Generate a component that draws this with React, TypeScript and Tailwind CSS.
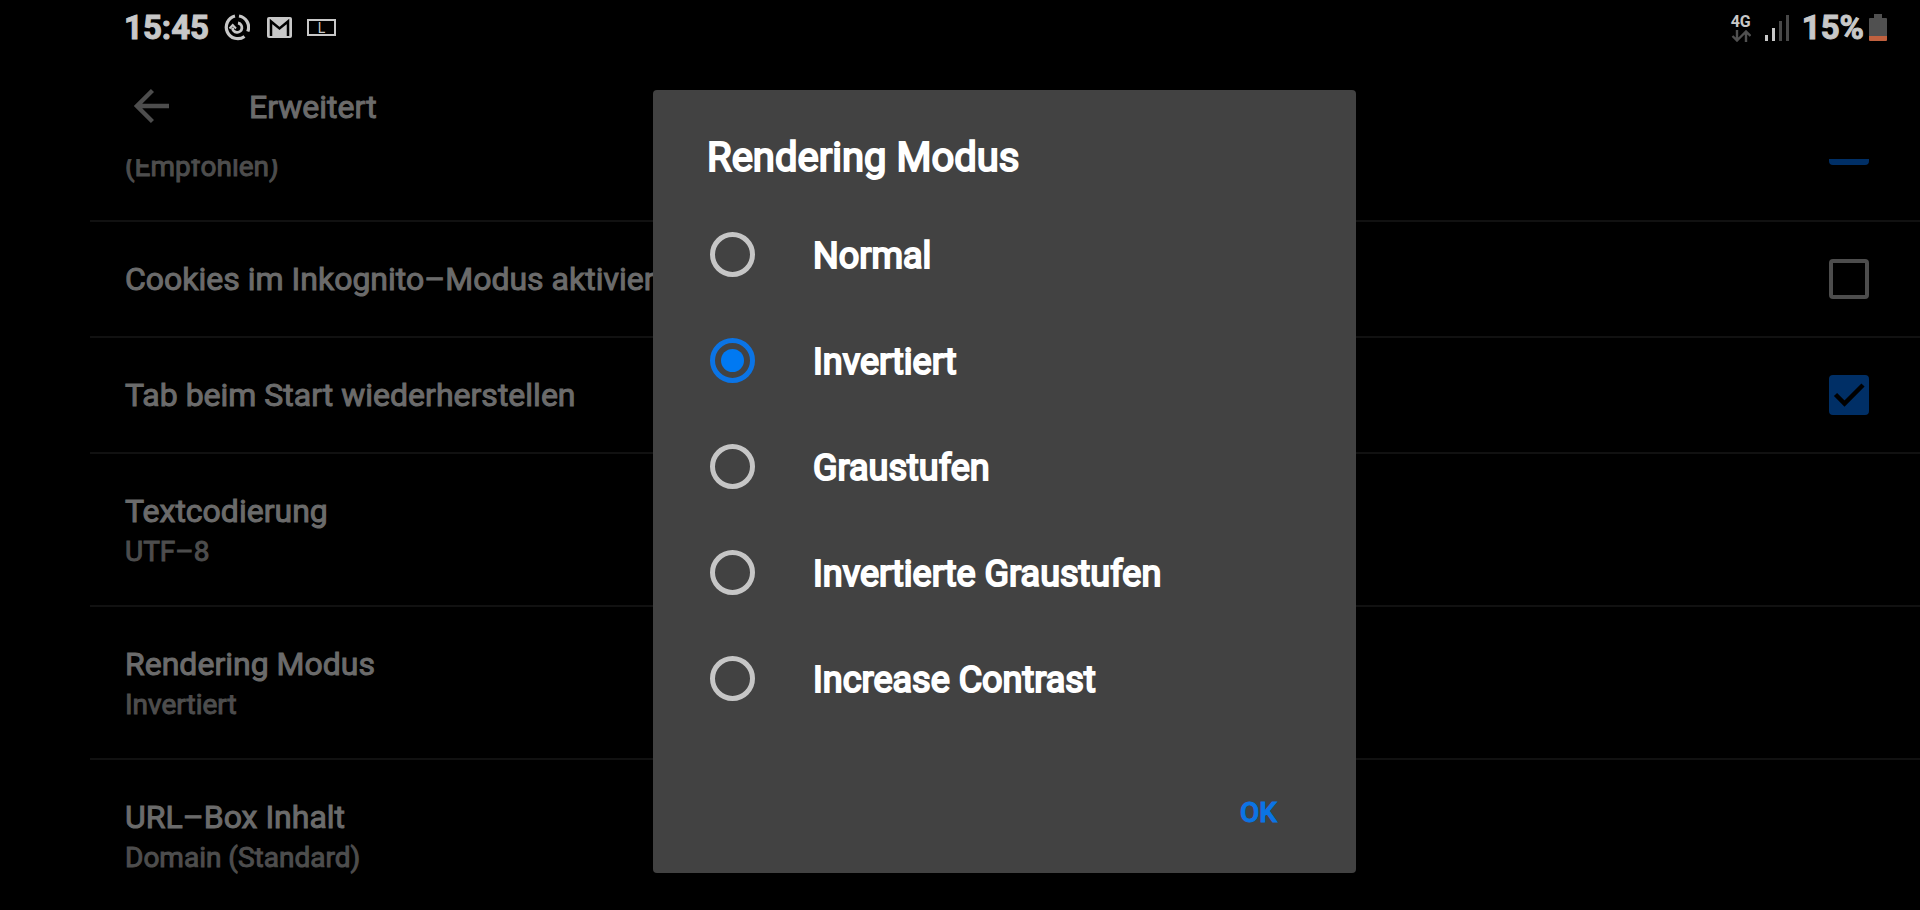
import { useState } from "react";
import { clsx } from "clsx";

type Setting = {
  id: string;
  title: string;
  summary?: string;
  checkbox?: boolean;
};

const SETTINGS: Setting[] = [
  { id: "recommended", title: "", summary: "(Empfohlen)", checkbox: true },
  { id: "cookies", title: "Cookies im Inkognito–Modus aktivieren", checkbox: true },
  { id: "restore", title: "Tab beim Start wiederherstellen", checkbox: true },
  { id: "encoding", title: "Textcodierung", summary: "UTF–8" },
  { id: "rendering", title: "Rendering Modus", summary: "Invertiert" },
  { id: "urlbox", title: "URL–Box Inhalt", summary: "Domain (Standard)" },
];

const MODES = ["Normal", "Invertiert", "Graustufen", "Invertierte Graustufen", "Increase Contrast"];

function StatusBar() {
  return (
    <div className="flex h-[53px] flex-shrink-0 items-center justify-between pt-[2px] pr-[33px] pl-[124px] text-[33px] leading-10 font-bold text-[#c8c8c8]">
      <div className="flex items-center">
        <span className="w-[100px]">15:45</span>
        <svg className="mr-[17px] h-[27px] w-[26px]" viewBox="0 0 26 27" fill="none" stroke="currentColor">
          <path d="M11 2A11.5 11.5 0 1 0 20.5 22.5" strokeWidth="3.2" />
          <path d="M15 2A11.5 11.5 0 0 1 23.8 17.5" strokeWidth="3.2" />
          <path d="M8.5 13.5A4.7 4.7 0 1 0 14 9" strokeWidth="2.8" />
          <path d="M5.5 14.5L8.7 11l3.3 3.5" strokeWidth="2" />
        </svg>
        <svg className="mr-[15px] h-[21px] w-[25px]" viewBox="0 0 25 21">
          <rect width="25" height="21" rx="2" fill="currentColor" />
          <path d="M4 19V4.5l8.5 7 8.5-7V19" fill="none" stroke="#000" strokeWidth="2.5" />
        </svg>
        <span className="flex h-[17px] w-[29px] items-center justify-center border-2 border-current text-[14px] leading-3 font-normal [-webkit-text-stroke:0]">
          L
        </span>
      </div>
      <div className="flex items-center">
        <div className="mr-[14px] flex w-5 flex-col items-center">
          <span className="text-[16px] leading-4 [-webkit-text-stroke:0]">4G</span>
          <svg className="h-3 w-5" viewBox="0 0 20 12" fill="none" stroke="#505050" strokeWidth="2.4">
            <path d="M6 0v10M1.5 6L6 10.5 10.5 6M15 12V2M10.5 6L15 1.5 19.5 6" />
          </svg>
        </div>
        <svg className="mr-[13px] h-[26px] w-6" viewBox="0 0 24 26">
          <path d="M0 20h3v6H0zM7 13h3v13H7z" fill="currentColor" />
          <path d="M14 6h3v20h-3zM21 0h3v26h-3z" fill="#484848" />
        </svg>
        <span className="mr-[5px]">15%</span>
        <svg className="h-[27px] w-[18px]" viewBox="0 0 18 27">
          <path d="M5 0h8v4h4a1 1 0 0 1 1 1v17H0V5a1 1 0 0 1 1-1h4z" fill="#505050" />
          <path d="M0 22h18v4a1 1 0 0 1-1 1H1a1 1 0 0 1-1-1z" fill="#c0613f" />
        </svg>
      </div>
    </div>
  );
}

function SettingRow({ setting, checked, onToggle }: { setting: Setting; checked: boolean; onToggle: () => void }) {
  const { title, summary, checkbox } = setting;

  const text = summary ? (
    <span className="flex flex-col pt-[3px]">
      <span className="h-[41px]">{title}</span>
      <span className="text-[28px] text-[#4d4d4d]">{summary}</span>
    </span>
  ) : (
    <span>{title}</span>
  );

  const className = clsx(
    "flex w-full items-center justify-between pr-[51px] pl-[35px] text-left text-[32px] leading-10 text-[#6b6b6b]",
    summary ? "h-[151px]" : "h-[114px]"
  );

  if (!checkbox) {
    return (
      <button type="button" className={className}>
        {text}
      </button>
    );
  }

  return (
    <label className={className}>
      {text}
      <span className="grid">
        <input
          type="checkbox"
          checked={checked}
          onChange={onToggle}
          className="col-start-1 row-start-1 size-10 appearance-none rounded-[4px] border-4 border-[#4d4d4d] checked:border-[#002f66] checked:bg-[#002f66]"
        />
        {checked && (
          <svg className="pointer-events-none col-start-1 row-start-1 size-10" viewBox="0 0 40 40" fill="none">
            <path d="M6.5 19.5l9 9L34 10" stroke="#000" strokeWidth="4.5" />
          </svg>
        )}
      </span>
    </label>
  );
}

function RenderingDialog({ onClose }: { onClose: () => void }) {
  const [mode, setMode] = useState("Invertiert");

  return (
    <div className="fixed inset-0 flex items-center justify-center pt-[53px] pl-[89px]">
      <div
        role="dialog"
        aria-labelledby="dialog-title"
        className="w-[703px] rounded-[4px] bg-[#424242] pt-11 text-white [-webkit-text-stroke:2px]"
      >
        <h2 id="dialog-title" className="px-[54px] text-[40px] leading-[48px]">
          Rendering Modus
        </h2>
        <div className="pt-[19px]">
          {MODES.map((name) => (
            <label key={name} className="flex h-[106px] items-center gap-[58px] px-[57px] text-[36px] leading-[48px]">
              <input
                type="radio"
                name="mode"
                value={name}
                checked={mode === name}
                onChange={() => setMode(name)}
                className="grid size-[45px] appearance-none place-content-center rounded-full border-[5px] border-[#c6c6c6] checked:border-[#0b74e5] checked:before:size-[23px] checked:before:rounded-full checked:before:bg-[#0079f2]"
              />
              <span className="pt-[3px]">{name}</span>
            </label>
          ))}
        </div>
        <div className="flex h-[142px] items-center justify-end pt-[22px] pr-[79px]">
          <button
            type="button"
            onClick={onClose}
            className="text-[28px] leading-10 font-medium text-[#0b74e5] [-webkit-text-stroke:1px]"
          >
            OK
          </button>
        </div>
      </div>
    </div>
  );
}

export default function App() {
  const [checked, setChecked] = useState<Record<string, boolean>>({ recommended: true, restore: true });
  const [dialogOpen, setDialogOpen] = useState(true);

  return (
    <div className="flex h-screen flex-col overflow-hidden bg-black font-['Roboto',sans-serif] [-webkit-text-stroke:1px]">
      <StatusBar />

      {/* Toolbar */}
      <header className="flex h-[106px] flex-shrink-0 items-center gap-20 pl-[133px] text-[32px] leading-10 text-[#6b6b6b]">
        <button type="button" aria-label="Zurück">
          <svg className="h-9 w-9" viewBox="0 0 37 36" fill="none" stroke="#4d4d4d" strokeWidth="4.5">
            <path d="M37 18H4M20 2L4 18l16 16" />
          </svg>
        </button>
        <h1 className="pt-[2px]">Erweitert</h1>
      </header>

      {/* Settings list, scrolled part way through its first row */}
      <main className="min-h-0 flex-1 overflow-hidden pl-[90px]">
        <ul className="-mt-[90px] divide-y-2 divide-[#111]">
          {SETTINGS.map((setting) => (
            <li key={setting.id}>
              <SettingRow
                setting={setting}
                checked={!!checked[setting.id]}
                onToggle={() => setChecked((c) => ({ ...c, [setting.id]: !c[setting.id] }))}
              />
            </li>
          ))}
        </ul>
      </main>

      {dialogOpen && <RenderingDialog onClose={() => setDialogOpen(false)} />}
    </div>
  );
}
